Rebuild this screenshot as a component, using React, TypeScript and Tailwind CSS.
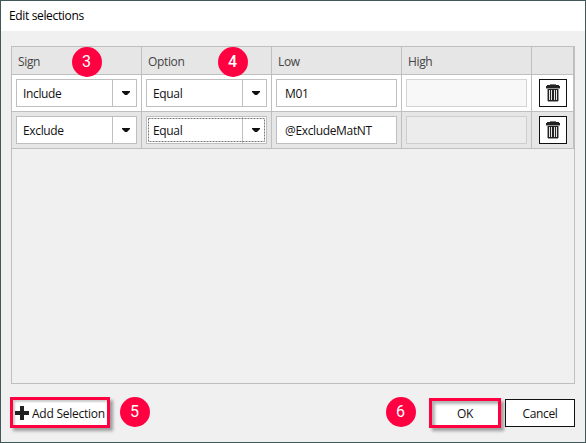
import type { ReactNode } from "react";

function Badge({ n, className }: { n: string; className: string }) {
  return (
    <span
      className={`absolute flex h-[30px] w-[30px] items-center justify-center rounded-full bg-[#ff0040] font-['Roboto','Liberation_Sans',sans-serif] text-[16px] leading-none tracking-normal text-white ${className}`}
    >
      {n}
    </span>
  );
}

function HeaderCell({ children }: { children?: ReactNode }) {
  return (
    <div className="flex h-7 items-center border-r border-b border-[#bfbfbf] bg-[#e6e6e6] pt-0.5 pl-1.5 text-[#444]">
      {children}
    </div>
  );
}

function Cell({ alt, children }: { alt?: boolean; children: ReactNode }) {
  return (
    <div
      className={`flex h-[37px] items-start justify-center border-r border-b border-[#bfbfbf] pt-1 ${alt ? "bg-[#e6e6e6]" : "bg-white"}`}
    >
      {children}
    </div>
  );
}

function Combo({ value, focused }: { value: string; focused?: boolean }) {
  return (
    <div className="relative flex h-7 w-[121px] border border-[#bfbfbf] bg-white">
      <div className="flex w-24 items-center border-r border-[#bfbfbf] pt-px pl-1.5">{value}</div>
      <div className="flex flex-1 items-center justify-center pl-[3px]">
        <svg width="8" height="4" viewBox="0 0 8 4" className="fill-[#111]">
          <path d="M0 0H8V1L5 4H3L0 1Z" />
        </svg>
      </div>
      {focused && (
        <svg className="absolute inset-0 h-[26px] w-[119px]" viewBox="0 0 119 26" fill="none" stroke="#777">
          <rect x="1.5" y="1.5" width="116" height="23" strokeDasharray="2 1" />
        </svg>
      )}
    </div>
  );
}

function Field({ value, disabled }: { value?: string; disabled?: boolean }) {
  return (
    <div
      className={`flex h-7 w-[121px] items-center border pt-px pl-2 ${disabled ? "border-[#b0b0b0]/50 bg-[#f2f2f2]/50" : "border-[#bfbfbf] bg-white"}`}
    >
      {value}
    </div>
  );
}

function TrashButton() {
  return (
    <button className="flex h-7 w-7 items-center justify-center border border-[#111] bg-white">
      <svg width="14" height="18" viewBox="0 0 14 18" shapeRendering="crispEdges">
        <path d="M4 0H10V1H4Z" fill="#777" />
        <path d="M1 1H13V2H14V4H0V2H1Z" fill="#222" />
        <path d="M0 4H14V5H0Z" fill="#999" />
        <path d="M1 5H13V17H12V18H2V17H1Z" fill="#999" />
        <path d="M2 5H12V17H2Z" fill="#222" />
        <path d="M3 6H4V16H3ZM5 6H6V16H5ZM8 6H9V16H8ZM10 6H11V16H10Z" fill="#e8e8e8" />
      </svg>
    </button>
  );
}

export default function App() {
  return (
    <div className="relative flex h-[443px] w-[586px] flex-col overflow-hidden border border-[#41585a] bg-[#f0f0f0] font-['Open_Sans','Noto_Sans',sans-serif] text-[12px] leading-4 tracking-[-0.35px] text-[#111]">
      <header className="flex h-[30px] shrink-0 items-center bg-white pl-2 text-black">
        Edit selections
      </header>
      <main className="mx-2.5 mt-[15px] h-[338px] w-[564px] shrink-0 border border-[#bfbfbf]">
        <div className="grid grid-cols-[130px_130px_130px_130px_42px]">
          <HeaderCell>Sign</HeaderCell>
          <HeaderCell>Option</HeaderCell>
          <HeaderCell>Low</HeaderCell>
          <HeaderCell>High</HeaderCell>
          <HeaderCell />
          <Cell><Combo value="Include" /></Cell>
          <Cell><Combo value="Equal" /></Cell>
          <Cell><Field value="M01" /></Cell>
          <Cell><Field disabled /></Cell>
          <Cell><TrashButton /></Cell>
          <Cell alt><Combo value="Exclude" /></Cell>
          <Cell alt><Combo value="Equal" focused /></Cell>
          <Cell alt><Field value="@ExcludeMatNT" /></Cell>
          <Cell alt><Field disabled /></Cell>
          <Cell alt><TrashButton /></Cell>
        </div>
      </main>
      <footer className="mt-[13px] flex items-start pr-2.5 pl-[9px]">
        <button className="flex h-[31px] w-[100px] items-center gap-[3px] border-3 border-[#ff0040] bg-white pl-0.5 whitespace-nowrap shadow-[3px_3px_3px_rgba(0,0,0,0.35),inset_2px_2px_2px_rgba(0,0,0,0.2)]">
          <svg width="14" height="14" viewBox="0 0 14 14" className="shrink-0 fill-[#222]">
            <path d="M5 0H9V5H14V9H9V14H5V9H0V5H5Z" />
          </svg>
          <span className="pt-0.5 tracking-[-0.25px]">Add Selection</span>
        </button>
        <button className="mt-px ml-auto h-[30px] w-[72px] border-3 border-[#ff0040] bg-white pt-0.5 shadow-[3px_3px_3px_rgba(0,0,0,0.35),inset_3px_3px_3px_rgba(0,0,0,0.3)]">
          OK
        </button>
        <button className="mt-0.5 ml-1 h-7 w-[70px] border border-[#111] bg-white pt-0.5">Cancel</button>
      </footer>
      <Badge n="3" className="top-[45.5px] left-[70.5px]" />
      <Badge n="4" className="top-[45.5px] left-[216.5px] font-medium" />
      <Badge n="5" className="top-[395.5px] left-[118.5px]" />
      <Badge n="6" className="top-[396px] left-[384.5px]" />
    </div>
  );
}
